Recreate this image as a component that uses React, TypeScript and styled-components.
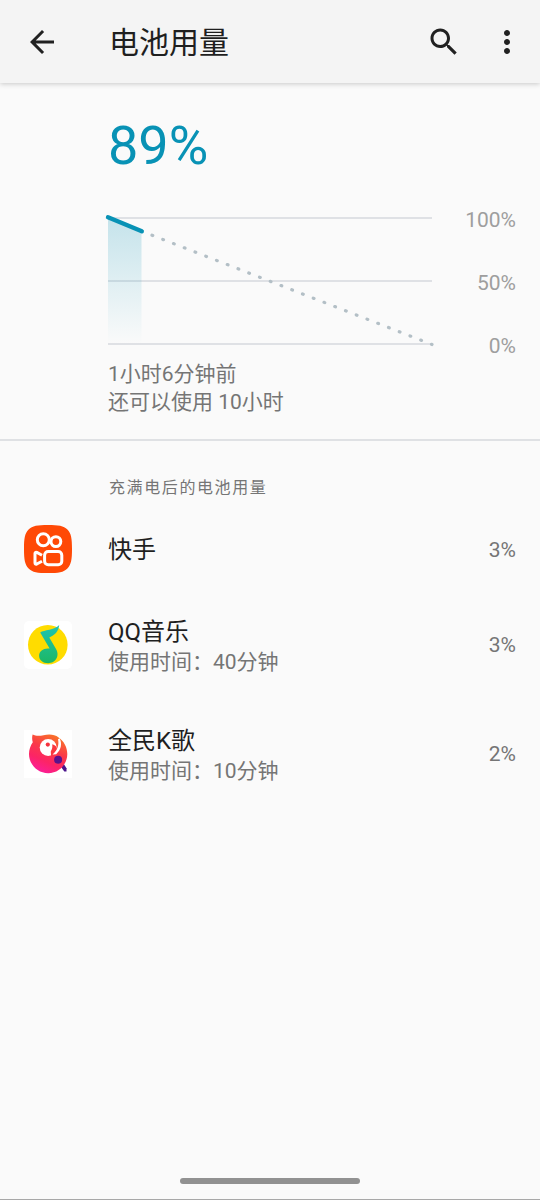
import React from "react";
import styled, { createGlobalStyle } from "styled-components";

const GlobalStyle = createGlobalStyle`
  *, *::before, *::after { box-sizing: border-box; }
  body {
    margin: 0;
    background: #fafafa;
    color: #1f1f1f;
    font-family: Roboto, "Noto Sans CJK SC", sans-serif;
  }
  h1, h2, h3, p, ul { margin: 0; padding: 0; font-weight: 400; }
`;

const Page = styled.div`
  display: flex;
  flex-direction: column;
  min-height: 100vh;
  border-bottom: 1px solid #a8a8a8;
`;

const AppBar = styled.header`
  display: flex;
  align-items: center;
  height: 83px;
  padding: 0 15px 0 24px;
  background: #f4f4f4;
  box-shadow: 0 1px 5px rgba(0, 0, 0, 0.2);
`;

const Title = styled.h1`
  flex: 1;
  padding: 2px 0 0 49px;
  font-size: 30px;
  line-height: 40px;
`;

const Actions = styled.div`
  display: flex;
  gap: 27px;
`;

const IconButton = styled.button`
  display: flex;
  width: 36px;
  height: 36px;
  padding: 0;
  border: 0;
  background: none;
  color: #212121;
  cursor: pointer;

  svg {
    width: 36px;
    height: 36px;
    fill: currentColor;
  }
`;

const Summary = styled.section`
  padding: 31px 24px 23px 108px;
  border-bottom: 2px solid #dfe1e4;
`;

const Level = styled.p`
  color: #0892b5;
  font-size: 54px;
  line-height: 64px;
`;

const Chart = styled.div`
  display: grid;
  grid-template-columns: 1fr 84px;
  margin-top: 30px;
`;

const Plot = styled.svg`
  display: block;
  width: 100%;
  height: auto;
  margin: 10px 0 14px;
  overflow: visible;
`;

const Scale = styled.div`
  display: flex;
  flex-direction: column;
  justify-content: space-between;
  color: #9e9e9e;
  font-size: 21px;
  line-height: 24px;
  text-align: right;
`;

const Caption = styled.p`
  margin-top: 2px;
  color: #757575;
  font-size: 21px;
  line-height: 28px;
`;

const SectionTitle = styled.h2`
  padding: 35px 24px 0 109px;
  color: #757575;
  font-size: 16px;
  line-height: 24px;
  letter-spacing: 0.1em;
`;

const AppList = styled.ul`
  margin-top: 8px;
  list-style: none;
`;

const AppRow = styled.li<{ $tall: boolean }>`
  display: flex;
  align-items: center;
  min-height: ${(p) => (p.$tall ? 109 : 82)}px;
  padding: 0 24px;
`;

const AppIcon = styled.svg`
  flex: none;
  width: 48px;
  height: 48px;
  margin-right: 36px;
`;

const AppText = styled.div`
  flex: 1;
  padding-top: 2px;
`;

const AppName = styled.h3`
  font-size: 24px;
  line-height: 32px;
`;

const AppDetail = styled.p`
  color: #757575;
  font-size: 21px;
  line-height: 28px;
`;

const Share = styled.span`
  padding-top: 1px;
  color: #757575;
  font-size: 21px;
  line-height: 28px;
`;

const NavBar = styled.footer`
  display: flex;
  justify-content: center;
  margin-top: auto;
  padding-bottom: 15px;
`;

const NavHandle = styled.div`
  width: 180px;
  height: 6px;
  border-radius: 3px;
  background: #919191;
`;

const KuaishouIcon = () => (
  <AppIcon viewBox="0 0 48 48" aria-hidden="true">
    <path
      fill="#ff4906"
      d="M24 0C34.500 0 39.600 .8 43.400 4.600C47.200 8.400 48 13.500 48 24S47.200 39.600 43.400 43.400C39.600 47.200 34.500 48 24 48S8.400 47.200 4.600 43.400C.8 39.600 0 34.500 0 24S.8 8.400 4.600 4.600C8.400 .8 13.500 0 24 0Z"
    />
    <g fill="none" stroke="#fff" strokeWidth="3" strokeLinejoin="round">
      <circle cx="19.300" cy="14.800" r="6" />
      <circle cx="31.900" cy="16.600" r="4.900" />
      <rect x="20.600" y="26.600" width="17.200" height="13.200" rx="3.600" />
      <path d="M18 30.200L12.800 27.400Q11 26.800 11 28.600V37.800Q11 39.600 12.800 39L18 36.200" />
    </g>
  </AppIcon>
);

const QQMusicIcon = () => (
  <AppIcon viewBox="0 0 48 48" aria-hidden="true">
    <defs>
      <linearGradient id="note" x1="0" y1="0" x2="0" y2="1">
        <stop offset="0" stopColor="#1fc4b4" />
        <stop offset="1" stopColor="#1cb764" />
      </linearGradient>
    </defs>
    <rect width="48" height="48" rx="5" fill="#fff" />
    <circle cx="23.800" cy="23.800" r="19.800" fill="#ffdc00" />
    <path
      fill="url(#note)"
      d="M16.200 11.600C20 8.800 30.500 9.300 35.200 4.100C34.600 10.500 30.500 14.700 25.300 16.400L31.600 27.300C36.500 35 31.500 42.200 24.200 42.200C18.800 42.200 15.100 39 15.100 34.700C15.100 29.800 20.100 26.700 25.600 27.600Z"
    />
  </AppIcon>
);

const KaraokeIcon = () => (
  <AppIcon viewBox="0 0 48 48" aria-hidden="true">
    <defs>
      <linearGradient id="bird" x1=".75" y1="0" x2=".3" y2="1">
        <stop offset="0" stopColor="#f97a26" />
        <stop offset=".4" stopColor="#fa3a48" />
        <stop offset=".7" stopColor="#fc2466" />
        <stop offset="1" stopColor="#fb1e9c" />
      </linearGradient>
    </defs>
    <rect width="48" height="48" fill="#fff" />
    <path d="M36.600 36.200L39.800 34L42.500 38.200V41.600H40.300Z" fill="#4b148c" />
    <path
      fill="url(#bird)"
      d="M8.600 4.400C11.500 6 15 6.200 19.500 5.200C25 4 30.500 4.200 34.600 7.500C40 11 43.300 17.500 43.300 24C43.300 34.500 34.800 43.200 24.200 43.200S5 34.500 5 24C5 19.500 6.500 15.500 8.800 12.200C8 9.800 7.900 7 8.600 4.400Z"
    />
    <circle cx="24.200" cy="17.400" r="8.500" fill="#fff" />
    <circle cx="23.800" cy="14.600" r="2.100" fill="#f5333f" />
    <path d="M28.200 14.300C31 14.800 33 16.800 33 19.600C31.500 23.300 28.500 23.800 27.800 27.800C26.800 25.300 27 23.800 26.800 22.400C26.600 20.300 29 19.300 28.200 14.300Z" fill="#f9383f" />
    <path d="M35.600 8.300C38.200 13.500 37.400 19.500 32.200 24.200L28.500 24.600C33.500 20.500 35.300 15 34 9.300Z" fill="#fff" />
    <circle cx="34.100" cy="29.800" r="4" fill="#5a128c" />
  </AppIcon>
);

const apps = [
  { name: "快手", share: "3%", Icon: KuaishouIcon },
  { name: "QQ音乐", detail: "使用时间：40分钟", share: "3%", Icon: QQMusicIcon },
  { name: "全民K歌", detail: "使用时间：10分钟", share: "2%", Icon: KaraokeIcon },
];

const BatteryPlot = () => (
  <Plot viewBox="0 0 324 126" role="img" aria-label="电池电量">
    <defs>
      <linearGradient id="fill" x1="0" y1="0" x2="0" y2="1">
        <stop offset="0" stopColor="#0892b5" stopOpacity=".22" />
        <stop offset="1" stopColor="#0892b5" stopOpacity="0" />
      </linearGradient>
    </defs>
    <path d="M0 0H324M0 63H324M0 126H324" stroke="#dfe1e5" strokeWidth="2" />
    <path d="M0 0L33.500 13V126H0Z" fill="url(#fill)" />
    <line
      x1="44"
      y1="17.200"
      x2="324"
      y2="126.500"
      stroke="#b3bfc6"
      strokeWidth="3.200"
      strokeLinecap="round"
      strokeDasharray="0.800 10.740"
    />
    <line x1="0" y1="-0.700" x2="33.800" y2="13.300" stroke="#0892b5" strokeWidth="4.400" strokeLinecap="round" />
  </Plot>
);

export default function App() {
  return (
    <>
      <GlobalStyle />
      <Page>
        <AppBar>
          <IconButton aria-label="返回">
            <svg viewBox="0 0 24 24">
              <path d="M20 11H7.830l5.590-5.590L12 4l-8 8 8 8 1.410-1.410L7.830 13H20v-2z" />
            </svg>
          </IconButton>
          <Title>电池用量</Title>
          <Actions>
            <IconButton aria-label="搜索">
              <svg viewBox="0 0 24 24">
                <path d="M15.500 14h-.79l-.28-.27C15.410 12.590 16 11.110 16 9.500 16 5.910 13.090 3 9.500 3S3 5.910 3 9.500 5.910 16 9.500 16c1.610 0 3.090-.59 4.230-1.570l.27.28v.79l5 4.990L20.490 19l-4.990-5zm-6 0C7.010 14 5 11.990 5 9.500S7.010 5 9.500 5 14 7.010 14 9.500 11.990 14 9.500 14z" />
              </svg>
            </IconButton>
            <IconButton aria-label="更多选项">
              <svg viewBox="0 0 24 24">
                <path d="M12 8c1.100 0 2-.9 2-2s-.9-2-2-2-2 .9-2 2 .9 2 2 2zm0 2c-1.100 0-2 .9-2 2s.9 2 2 2 2-.9 2-2-.9-2-2-2zm0 6c-1.100 0-2 .9-2 2s.9 2 2 2 2-.9 2-2-.9-2-2-2z" />
              </svg>
            </IconButton>
          </Actions>
        </AppBar>
        <main>
          <Summary>
            <Level>89%</Level>
            <Chart>
              <BatteryPlot />
              <Scale>
                <span>100%</span>
                <span>50%</span>
                <span>0%</span>
              </Scale>
            </Chart>
            <Caption>
              1小时6分钟前
              <br />
              还可以使用 10小时
            </Caption>
          </Summary>
          <SectionTitle>充满电后的电池用量</SectionTitle>
          <AppList>
            {apps.map(({ name, detail, share, Icon }) => (
              <AppRow key={name} $tall={Boolean(detail)}>
                <Icon />
                <AppText>
                  <AppName>{name}</AppName>
                  {detail && <AppDetail>{detail}</AppDetail>}
                </AppText>
                <Share>{share}</Share>
              </AppRow>
            ))}
          </AppList>
        </main>
        <NavBar>
          <NavHandle />
        </NavBar>
      </Page>
    </>
  );
}
